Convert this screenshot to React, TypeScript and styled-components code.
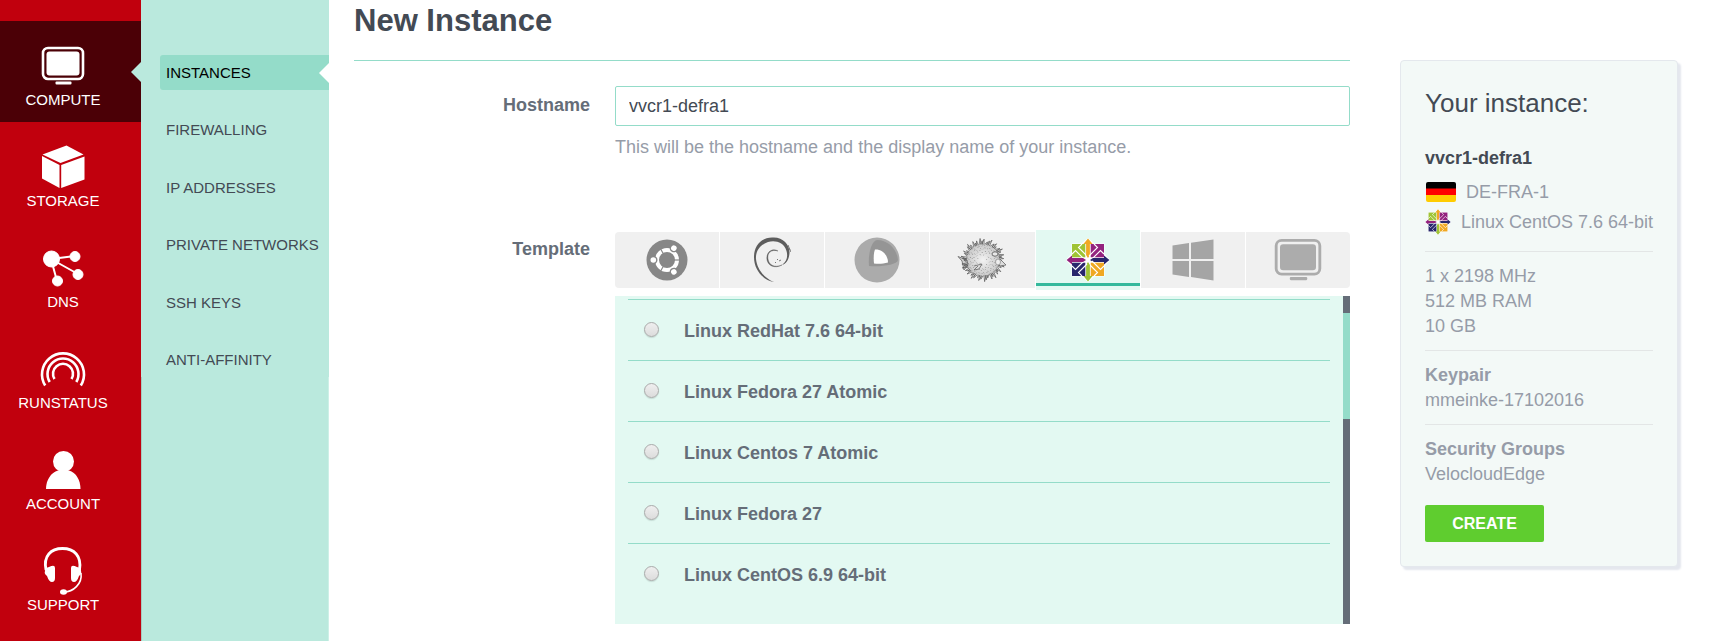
import React, { useState } from "react";
import styled, { createGlobalStyle, css } from "styled-components";

const c = {
  red: "#c1000d",
  darkRed: "#4b0006",
  mint: "#bae9dd",
  teal: "#94dcc9",
  tealStrong: "#34b99c",
  pale: "#e3f9f2",
  heading: "#434a54",
  label: "#656d78",
  muted: "#969ca8",
};

const GlobalStyle = createGlobalStyle`
  * { box-sizing: border-box; }
  body {
    margin: 0;
    background: #fff;
    color: ${c.label};
    font: 18px/25px "Liberation Sans", Arial, sans-serif;
  }
  ul { list-style: none; margin: 0; padding: 0; }
  h1, h2, p { margin: 0; }
  a { text-decoration: none; }
`;

const Page = styled.div`
  display: flex;
  min-height: 100vh;
`;

const Sidebar = styled.nav`
  flex: 0 0 141px;
  padding-top: 21px;
  background: ${c.red};
`;

const SideLink = styled.a<{ $active?: boolean }>`
  position: relative;
  display: flex;
  flex-direction: column;
  align-items: center;
  height: 101px;
  padding: 20px 15px 0 0;
  color: #fff;
  font-size: 15px;
  line-height: 20px;
  background: ${(p) => (p.$active ? c.darkRed : "transparent")};
`;

const SideIcon = styled.span`
  display: flex;
  align-items: center;
  height: 49px;
`;

const Notch = styled.span<{ $color: string }>`
  position: absolute;
  right: 0;
  top: 50%;
  margin-top: -10px;
  border: 10px solid transparent;
  border-left-width: 0;
  border-right-color: ${(p) => p.$color};
`;

const Submenu = styled.nav`
  display: flex;
  flex-direction: column;
  flex: 0 0 188px;
  padding-top: 55px;
  background: ${c.mint};
`;

const SubList = styled.ul`
  display: flex;
  flex-direction: column;
  justify-content: space-between;
  height: 322px;
  padding-left: 19px;
`;

const SubLink = styled.a<{ $active?: boolean }>`
  position: relative;
  display: block;
  padding-left: 6px;
  border-radius: 3px 0 0 3px;
  color: ${(p) => (p.$active ? "#000" : c.heading)};
  font-size: 15px;
  line-height: 35px;
  white-space: nowrap;
  background: ${(p) => (p.$active ? c.teal : "transparent")};
`;

const SubFill = styled.div`
  flex: 1;
  border-left: 1px solid #a5cabf;
  border-right: 1px solid #cdf0e7;
`;

const Content = styled.main`
  flex: 1;
  display: grid;
  grid-template-columns: minmax(0, 1fr) 278px;
  column-gap: 50px;
  align-items: start;
  padding: 0 31px 0 25px;
`;

const Title = styled.h1`
  padding: 3px 0 21px;
  margin-bottom: 25px;
  border-bottom: 1px solid ${c.teal};
  color: ${c.heading};
  font-size: 31px;
  line-height: 36px;
`;

const FormRow = styled.div`
  display: grid;
  grid-template-columns: 236px minmax(0, 1fr);
  column-gap: 25px;
  & + & { margin-top: 70px; }
`;

const labelStyle = css`
  padding-top: 7px;
  font-weight: bold;
  text-align: right;
`;
const Label = styled.label`${labelStyle}`;
const GroupLabel = styled.div`${labelStyle}`;

const TextInput = styled.input`
  display: block;
  width: 100%;
  height: 40px;
  padding: 0 13px;
  border: 1px solid ${c.teal};
  border-radius: 2px;
  outline: none;
  background: #fff;
  color: ${c.heading};
  font: inherit;
`;

const Help = styled.p`
  margin-top: 9px;
  color: ${c.muted};
`;

const Tabs = styled.div`
  display: flex;
  align-items: center;
  gap: 1px;
  height: 60px;
  margin-bottom: 6px;
`;

const Tab = styled.button<{ $active: boolean }>`
  flex: 1;
  display: flex;
  align-items: center;
  justify-content: center;
  height: ${(p) => (p.$active ? 60 : 56)}px;
  padding: 0;
  border: 0;
  background: ${(p) => (p.$active ? `linear-gradient(${c.tealStrong}, ${c.tealStrong}) 0 53px / 100% 3px no-repeat ${c.pale}` : "#f0f0f0")};
  &:first-child { border-radius: 4px 0 0 4px; }
  &:last-child { border-radius: 0 4px 4px 0; }
`;

const ListPanel = styled.div`
  display: flex;
  height: 328px;
  background: ${c.pale};
`;

const OptionList = styled.ul`
  flex: 1;
  padding: 3px 13px 0;
  overflow: hidden;
`;

const Option = styled.label`
  display: flex;
  align-items: center;
  gap: 25px;
  height: 61px;
  padding: 3px 0 0 16px;
  border-top: 1px solid ${c.teal};
  font-weight: bold;
`;

const Radio = styled.input`
  appearance: none;
  width: 15px;
  height: 15px;
  margin: 0 0 4px;
  border: 1px solid #aaa;
  border-radius: 50%;
  background: linear-gradient(#efefef, #dcdcdc);
  box-shadow: 0 1px 1px #c6dcd5;
  &:checked { background: radial-gradient(#555 0 3px, #e6e6e6 4px); }
`;

const ScrollTrack = styled.div`
  width: 7px;
  padding-top: 17px;
  background: ${c.label};
`;
const ScrollThumb = styled.div`
  height: 106px;
  background: ${c.teal};
`;

const Card = styled.aside`
  margin-top: 60px;
  padding: 26px 24px 24px;
  border: 1px solid #e4e8ed;
  border-radius: 4px;
  background: #f3f9f7;
  box-shadow: 3px 3px 2px #e4e7ee;
  color: ${c.muted};
`;

const CardTitle = styled.h2`
  margin-bottom: 26px;
  color: ${c.heading};
  font-size: 26px;
  font-weight: normal;
  line-height: 33px;
`;

const InstanceName = styled.p`
  margin-bottom: 6px;
  color: ${c.heading};
  font-weight: bold;
`;

const IconLine = styled.div`
  display: flex;
  align-items: center;
  gap: 10px;
  height: 30px;
  white-space: nowrap;
  svg { flex: none; }
`;

const CardSection = styled.section`
  padding: 12px 0 11px;
  border-top: 1px solid #e3e6e6;
`;
const Facts = styled.div`margin-bottom: 14px;`;

const CreateButton = styled.button`
  display: block;
  width: 119px;
  height: 37px;
  margin-top: 7px;
  border: 0;
  border-radius: 2px;
  background: #5fcd2f;
  color: #fff;
  font: bold 16px/20px "Liberation Sans", Arial, sans-serif;
`;

const Screen = ({ color = "#fff", size = 44 }: { color?: string; size?: number }) => (
  <svg width={size} height={size} viewBox="0 0 44 44">
    <rect x="2" y="4" width="40" height="31" rx="5" fill="none" stroke={color} strokeWidth="2.6" />
    <rect x="5.5" y="7.5" width="33" height="24" rx="3" fill={color} />
    <rect x="14.5" y="37.5" width="16" height="3" rx="1" fill={color} />
  </svg>
);

const Cube = () => (
  <svg width="44" height="44" viewBox="0 0 44 44" fill="#fff">
    <path d="M25.5 .5 42.500 9.500 19.500 18 1.500 9.500Z" />
    <path d="M1 11 18.500 20V43L1 33.500Z" />
    <path d="M20.200 20 43.500 11.500V34.500L20.200 43Z" />
  </svg>
);

const Nodes = () => (
  <svg width="44" height="44" viewBox="0 0 44 44" fill="#fff" stroke="#fff">
    <path d="M10 13 34 10M10 13 37 28M10 13 16 35" strokeWidth="2" />
    <circle cx="10.5" cy="13" r="8" />
    <circle cx="34" cy="10.5" r="5" />
    <circle cx="37" cy="28.5" r="5" />
    <circle cx="16.5" cy="35" r="5" />
  </svg>
);

const Rainbow = () => (
  <svg width="48" height="44" viewBox="0 0 48 44" fill="none" stroke="#fff" strokeWidth="2.6">
    <path d="M6.200 38.500A21 21 0 1 1 41.800 38.500" />
    <path d="M10.700 35A15.500 15.500 0 1 1 37.300 35" />
    <path d="M15.500 32A10 10 0 1 1 32.500 32" />
  </svg>
);

const Person = () => (
  <svg width="44" height="44" viewBox="0 0 44 44" fill="#fff">
    <circle cx="22.5" cy="13.5" r="10.5" />
    <path d="M5 41C5 32 10 24.500 17 22.500H28C35 24.500 39.500 32 39.500 41Z" />
  </svg>
);

const Headset = () => (
  <svg width="44" height="48" viewBox="0 0 44 48" fill="#fff">
    <path d="M5 23C2 9 10 1.500 21.500 1.500S41 9 38.500 23" fill="none" stroke="#fff" strokeWidth="2.8" />
    <path d="M8 20q6-3 6 1v10q0 4-3 4-3 0-5-6-4-3-1-8ZM36 20q-6-3-6 1v10q0 4 3 4 3 0 5-6 4-3 1-8Z" />
    <path d="M40 26C41.500 37 32 45 23 45" fill="none" stroke="#fff" strokeWidth="1.6" />
    <ellipse cx="22.5" cy="45" rx="3.5" ry="2.8" />
  </svg>
);

const Ubuntu = () => (
  <svg width="42" height="42" viewBox="0 0 42 42">
    <circle cx="21" cy="21" r="20.5" fill="#878787" />
    <circle cx="21" cy="21" r="10" fill="none" stroke="#fff" strokeWidth="4" />
    {[0, 120, 240].map((a) => (
      <g key={a} transform={`rotate(${a} 21 21)`}>
        <circle cx="7.3" cy="21" r="4.2" fill="#878787" />
        <circle cx="7.3" cy="21" r="2.8" fill="#fff" />
        <path d="M28 21H34" stroke="#878787" strokeWidth="1.2" />
      </g>
    ))}
  </svg>
);

const Debian = () => (
  <svg width="38" height="46" viewBox="0 0 38 46" fill="#5d5d5d">
    <path d="M21 45C10 43 1 33 1 20C1 8 9 0 20 .5C30 0 37 8 36.500 16C36 23 33 27 29 28C34 24 35 19 33.500 14C31 5 22 3 15 5C6 8 2.500 15 3 22C4 32 11 41 21 45Z" />
    <path d="M25 14C18 12 14 16 15 22C16 28 21 31 29 28C22 32 14 29 13.800 21C14 14 20 11 25 14Z" stroke="#5d5d5d" strokeWidth=".4" />
    <path d="M35 8 37 13M36 11 38 15M24 22l1 1M26 24l2-1M22 25l1 1" stroke="#777" strokeWidth="1" />
  </svg>
);

const CoreOS = () => (
  <svg width="46" height="46" viewBox="0 0 46 46">
    <circle cx="23" cy="23" r="22.5" fill="#ababab" />
    <path d="M23 3C34 3 43 12 44 23C43 28 27 30 15 29C14 18 17 4 23 3Z" fill="#959595" />
    <path d="M21 12.500C28 12 34 18 34 25.500C29 27 24 27 20 26.500C19.500 22 19.500 16 21 12.500Z" fill="#fff" />
  </svg>
);

const polar = (t: number, q: number) =>
  `${(26 + Math.cos(t) * q * 1.03).toFixed(1)} ${(22 + Math.sin(t) * q).toFixed(1)}`;
const spikes = Array.from({ length: 52 }, (_, i) => {
  const a = (i / 52) * Math.PI * 2 + ((i * 5) % 3) * 0.03;
  const r = 18.5 + ((i * 7) % 5) * 0.8;
  return `M${polar(a - 0.06, 16)}L${polar(a + 0.05, r)}L${polar(a + 0.06, 15.5)}`;
}).join("");
const speckles = Array.from({ length: 110 }, (_, i) => {
  const r = 3 + Math.sqrt(i / 110) * 13.5;
  return `M${polar(i * 2.4, r)}l.7 ${i % 2 ? 0.9 : -0.7}`;
}).join("");

const Puffer = () => (
  <svg width="50" height="44" viewBox="0 0 50 44">
    <defs>
      <radialGradient id="belly">
        <stop offset="0" stopColor="#f2f2f2" />
        <stop offset="1" stopColor="#c9c9c9" />
      </radialGradient>
    </defs>
    <ellipse cx="26" cy="22" rx="17" ry="16.5" fill="url(#belly)" />
    <path d="M10 22 1 18.500 5 23 7 32 11 27Z" fill="#d0d0d0" stroke="#666" strokeWidth=".8" />
    <path d={spikes} fill="none" stroke="#555" strokeWidth=".7" />
    <path d={speckles} stroke="#777" strokeWidth=".7" />
    <path d="M43 21 49 27 43 28M17 28l8-2-3 5-5 1 4-4" fill="#ddd" stroke="#666" strokeWidth=".8" />
    <ellipse cx="38" cy="16" rx="3" ry="2.2" fill="#e8e8e8" stroke="#555" strokeWidth=".8" />
    <ellipse cx="41" cy="24" rx="2.5" ry="3" fill="#eee" stroke="#777" strokeWidth=".6" />
  </svg>
);

const CentOS = ({ size }: { size: number }) => {
  const quads = [
    ["#9fc434", "#f0a822"],
    ["#93227e", "#28276d"],
    ["#f0a822", "#9fc434"],
    ["#28276d", "#93227e"],
  ];
  return (
    <svg width={size} height={size} viewBox="0 0 44 44">
      <path d="M22 0 28.500 5.500H38.500V15.500L44 22 38.500 28.500V38.500H28.500L22 44 15.500 38.500H5.500V28.500L0 22 5.500 15.500V5.500H15.500Z" fill="#fff" />
      {quads.map(([block, arrow], i) => (
        <g key={i} transform={`rotate(${i * 90} 22 22)`}>
          <path d="M6 6H19.300V19.300H6Z" fill={block} />
          <path d="M16 6 12.500 9.500 21 18M6 16 9.500 12.500 18 21" fill="none" stroke="#fff" strokeWidth="1.1" />
          <path d="M22 .6 26.600 6H23.900V17L22 20 20.100 17V6H17.400Z" fill={arrow} />
        </g>
      ))}
    </svg>
  );
};

const Windows = () => (
  <svg width="42" height="42" viewBox="0 0 42 42" fill="#a5a5a5">
    <path d="M.5 6.500 17 4V20H.5ZM19 3.700 41.500.5V20H19ZM.5 22H17V38L.5 35.500ZM19 22H41.500V41.500L19 38Z" />
  </svg>
);

const Flag = () => (
  <svg width="31" height="20" viewBox="0 0 31 20">
    <path d="M1 2q0-2 2-2h26q2 0 2 2v5H1Z" fill="#000" />
    <path d="M1 6.500H31V13H1Z" fill="#f00" />
    <path d="M1 13H31v5q0 2-2 2H3q-2 0-2-2Z" fill="#fc0" />
  </svg>
);

const sections = [
  { name: "COMPUTE", icon: <Screen /> },
  { name: "STORAGE", icon: <Cube /> },
  { name: "DNS", icon: <Nodes /> },
  { name: "RUNSTATUS", icon: <Rainbow /> },
  { name: "ACCOUNT", icon: <Person /> },
  { name: "SUPPORT", icon: <Headset /> },
];
const pages = ["INSTANCES", "FIREWALLING", "IP ADDRESSES", "PRIVATE NETWORKS", "SSH KEYS", "ANTI-AFFINITY"];
const families = [
  { name: "Ubuntu", icon: <Ubuntu /> },
  { name: "Debian", icon: <Debian /> },
  { name: "CoreOS", icon: <CoreOS /> },
  { name: "OpenBSD", icon: <Puffer /> },
  { name: "CentOS", icon: <CentOS size={44} /> },
  { name: "Windows", icon: <Windows /> },
  { name: "Other", icon: <Screen color="#acacac" size={48} /> },
];
const templates = [
  "Linux RedHat 7.6 64-bit",
  "Linux Fedora 27 Atomic",
  "Linux Centos 7 Atomic",
  "Linux Fedora 27",
  "Linux CentOS 6.9 64-bit",
];

export default function App() {
  const [hostname, setHostname] = useState("vvcr1-defra1");
  const [family, setFamily] = useState("CentOS");
  return (
    <Page>
      <GlobalStyle />
      <Sidebar>
        {sections.map((s, i) => (
          <SideLink key={s.name} href="#" $active={i === 0}>
            <SideIcon>{s.icon}</SideIcon>
            {s.name}
            {i === 0 && <Notch $color={c.mint} />}
          </SideLink>
        ))}
      </Sidebar>
      <Submenu>
        <SubList>
          {pages.map((name, i) => (
            <li key={name}>
              <SubLink href="#" $active={i === 0}>
                {name}
                {i === 0 && <Notch $color="#fff" />}
              </SubLink>
            </li>
          ))}
        </SubList>
        <SubFill />
      </Submenu>
      <Content>
        <form>
          <Title>New Instance</Title>
          <FormRow>
            <Label htmlFor="hostname">Hostname</Label>
            <div>
              <TextInput id="hostname" value={hostname} onChange={(e) => setHostname(e.target.value)} />
              <Help>This will be the hostname and the display name of your instance.</Help>
            </div>
          </FormRow>
          <FormRow>
            <GroupLabel id="template">Template</GroupLabel>
            <div role="group" aria-labelledby="template">
              <Tabs>
                {families.map((f) => (
                  <Tab
                    key={f.name}
                    type="button"
                    aria-label={f.name}
                    $active={f.name === family}
                    onClick={() => setFamily(f.name)}
                  >
                    {f.icon}
                  </Tab>
                ))}
              </Tabs>
              <ListPanel>
                <OptionList>
                  {templates.map((t) => (
                    <li key={t}>
                      <Option>
                        <Radio type="radio" name="template" value={t} />
                        {t}
                      </Option>
                    </li>
                  ))}
                </OptionList>
                <ScrollTrack>
                  <ScrollThumb />
                </ScrollTrack>
              </ListPanel>
            </div>
          </FormRow>
        </form>
        <Card>
          <CardTitle>Your instance:</CardTitle>
          <InstanceName>{hostname}</InstanceName>
          <Facts>
            <IconLine>
              <Flag />
              DE-FRA-1
            </IconLine>
            <IconLine>
              <CentOS size={26} />
              Linux CentOS 7.6 64-bit
            </IconLine>
          </Facts>
          <CardSection>
            <p>1 x 2198 MHz</p>
            <p>512 MB RAM</p>
            <p>10 GB</p>
          </CardSection>
          <CardSection>
            <strong>Keypair</strong>
            <p>mmeinke-17102016</p>
          </CardSection>
          <CardSection>
            <strong>Security Groups</strong>
            <p>VelocloudEdge</p>
          </CardSection>
          <CreateButton type="button">CREATE</CreateButton>
        </Card>
      </Content>
    </Page>
  );
}
